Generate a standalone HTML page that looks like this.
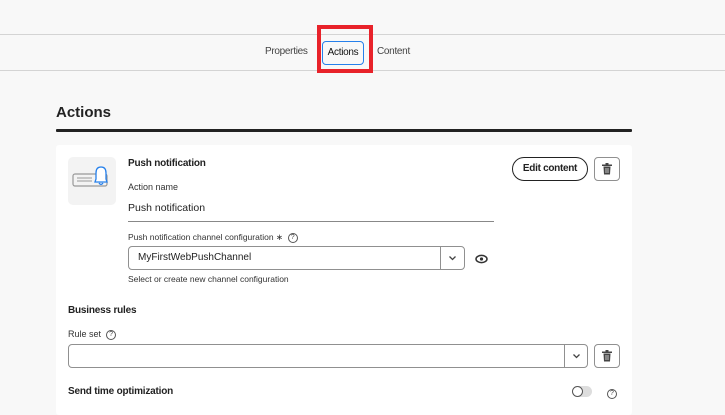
<!DOCTYPE html>
<html><head><meta charset="utf-8"><style>
*{margin:0;padding:0;box-sizing:border-box}
body{width:725px;height:410px;background:#f8f8f8;font-family:"Liberation Sans",sans-serif;color:#222;position:relative;overflow:hidden}
.a{position:absolute;white-space:nowrap}
.t{font-size:10px;color:#333}
.b{font-weight:bold;color:#222}
.box{position:absolute;border:1px solid #909090;border-radius:4px;background:#fff}
.q{display:inline-block;width:10px;height:10px;border:1px solid #555;border-radius:50%;font-size:7px;text-align:center;line-height:8px;color:#444;vertical-align:middle}
</style></head><body>
<div class="a" style="left:0;top:34px;width:725px;height:1px;background:#d4d4d4"></div>
<div class="a" style="left:0;top:70px;width:725px;height:1px;background:#d4d4d4"></div>
<div class="a t" style="left:265px;top:46px;font-size:10px;color:#444;letter-spacing:-0.3px">Properties</div>
<div class="a" style="left:322px;top:41px;width:42px;height:24px;border:1px solid #2680eb;border-radius:4px;font-size:10px;color:#111;text-align:center;line-height:22px;letter-spacing:-0.3px">Actions</div>
<div class="a" style="left:317px;top:25px;width:56px;height:48px;border:4px solid #e8222a"></div>
<div class="a t" style="left:377px;top:46px;font-size:10px;color:#444;letter-spacing:-0.3px">Content</div>
<div class="a" style="left:56px;top:104px;font-size:15px;font-weight:bold;color:#222">Actions</div>
<div class="a" style="left:56px;top:129px;width:576px;height:3px;background:#222;border-radius:1px"></div>
<div class="a" style="left:56px;top:145px;width:576px;height:270px;background:#fff;border-radius:3px"></div>
<div class="a" style="left:68px;top:157px;width:48px;height:48px;background:#f3f3f3;border-radius:5px"></div>
<svg class="a" style="left:68px;top:157px" width="48" height="48" viewBox="0 0 48 48">
<rect x="5" y="17" width="34" height="12" rx="2" fill="none" stroke="#999" stroke-width="1.2"/>
<line x1="9" y1="21" x2="24" y2="21" stroke="#999"/><line x1="9" y1="24" x2="24" y2="24" stroke="#999"/>
<path d="M27 25 L28 22 L28 16 Q28 10 33 10 Q38 10 38 16 L38 22 L39 25 Z" fill="#fff" stroke="#2680eb" stroke-width="1.3"/>
<path d="M31 26 Q33 29 35 26" fill="none" stroke="#2680eb" stroke-width="1.3"/>
</svg>
<div class="a b" style="left:128px;top:158px;font-size:10px;letter-spacing:-0.2px">Push notification</div>
<div class="a t" style="left:128px;top:182px;font-size:9px">Action name</div>
<div class="a" style="left:128px;top:202px;font-size:10.5px">Push notification</div>
<div class="a" style="left:128px;top:221px;width:366px;height:1px;background:#888"></div>
<div class="a t" style="left:128px;top:232px;font-size:8.5px">Push notification channel configuration ∗ &nbsp;<span class="q">?</span></div>
<div class="box" style="left:128px;top:246px;width:337px;height:24px"></div>
<div class="a" style="left:440px;top:247px;width:1px;height:22px;background:#909090"></div>
<svg class="a" style="left:448px;top:255px" width="9" height="6" viewBox="0 0 9 6"><path d="M1.5 1.5 L4.5 4.5 L7.5 1.5" fill="none" stroke="#444" stroke-width="1.3"/></svg>
<div class="a" style="left:138px;top:252px;font-size:10px;color:#222">MyFirstWebPushChannel</div>
<svg class="a" style="left:475px;top:254px" width="13" height="10" viewBox="0 0 13 10"><ellipse cx="6.5" cy="5" rx="5.5" ry="3.6" fill="none" stroke="#333" stroke-width="1.5"/><circle cx="6.5" cy="5" r="1.6" fill="#333"/></svg>
<div class="a t" style="left:128px;top:274px;font-size:8.5px">Select or create new channel configuration</div>
<div class="a" style="left:512px;top:157px;width:76px;height:24px;border:1.3px solid #222;border-radius:12px;font-size:10px;font-weight:bold;text-align:center;line-height:21px;letter-spacing:-0.3px">Edit content</div>
<div class="box" style="left:594px;top:157px;width:26px;height:24px"></div>
<div class="box" style="left:594px;top:344px;width:26px;height:24px"></div>
<svg class="a" style="left:601px;top:163px" width="12" height="12" viewBox="0 0 12 12"><rect x="1" y="1.5" width="10" height="1.5" fill="#444"/><rect x="4.5" y="0" width="3" height="2" fill="#444"/><path d="M2.5 3.5 H9.5 L9 11.5 H3 Z" fill="#444"/><line x1="5" y1="5" x2="5" y2="10" stroke="#fff" stroke-width=".7"/><line x1="7" y1="5" x2="7" y2="10" stroke="#fff" stroke-width=".7"/></svg>
<svg class="a" style="left:601px;top:350px" width="12" height="12" viewBox="0 0 12 12"><rect x="1" y="1.5" width="10" height="1.5" fill="#444"/><rect x="4.5" y="0" width="3" height="2" fill="#444"/><path d="M2.5 3.5 H9.5 L9 11.5 H3 Z" fill="#444"/><line x1="5" y1="5" x2="5" y2="10" stroke="#fff" stroke-width=".7"/><line x1="7" y1="5" x2="7" y2="10" stroke="#fff" stroke-width=".7"/></svg>
<div class="a b" style="left:68px;top:305px;font-size:10px;letter-spacing:-0.2px">Business rules</div>
<div class="a t" style="left:68px;top:329px;font-size:9px">Rule set &nbsp;<span class="q">?</span></div>
<div class="box" style="left:68px;top:344px;width:520px;height:24px"></div>
<div class="a" style="left:564px;top:345px;width:1px;height:22px;background:#909090"></div>
<svg class="a" style="left:572px;top:353px" width="9" height="6" viewBox="0 0 9 6"><path d="M1.5 1.5 L4.5 4.5 L7.5 1.5" fill="none" stroke="#444" stroke-width="1.3"/></svg>
<div class="a b" style="left:68px;top:386px;font-size:10px;letter-spacing:-0.2px">Send time optimization</div>
<div class="a" style="left:572px;top:386px;width:20px;height:11px;border-radius:6px;background:#ddd"></div>
<div class="a" style="left:572px;top:386px;width:11px;height:11px;border-radius:50%;border:1.3px solid #555;background:#fff"></div>
<div class="a" style="left:607px;top:385px"><span class="q">?</span></div>
</body></html>
